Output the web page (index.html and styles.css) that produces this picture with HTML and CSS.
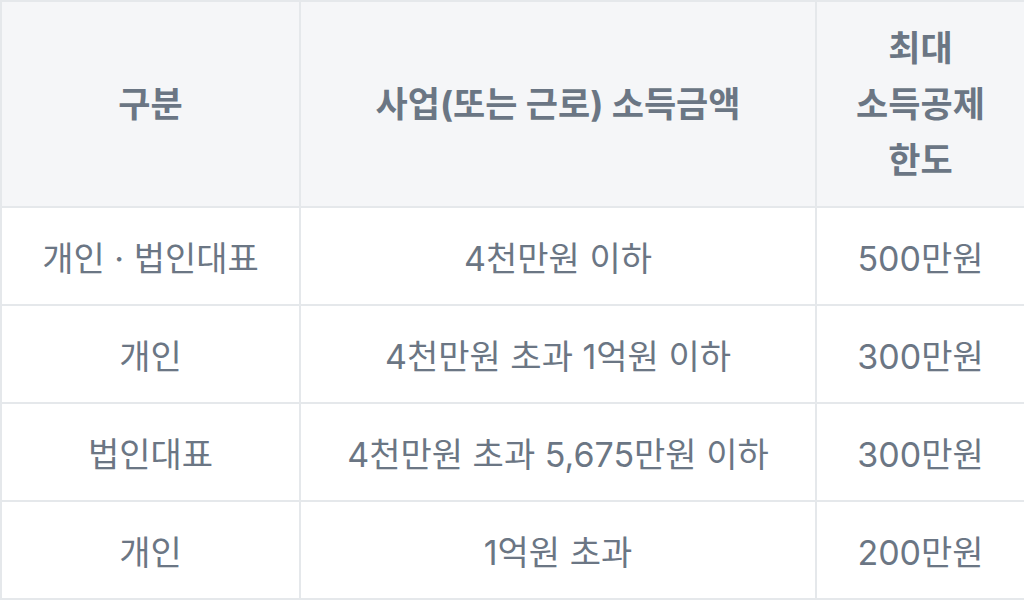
FILE: index.html
```html
<!DOCTYPE html>
<html lang="ko">
<head>
<meta charset="utf-8">
<link rel="stylesheet" href="styles.css">
</head>
<body>
<table class="deduction">
  <colgroup>
    <col class="c1">
    <col class="c2">
    <col class="c3">
  </colgroup>
  <thead>
    <tr class="head-row">
      <th>구분</th>
      <th>사업(또는 근로) 소득금액</th>
      <th>최대<br>소득공제<br>한도</th>
    </tr>
  </thead>
  <tbody>
    <tr class="body-row">
      <td>개인 · 법인대표</td>
      <td>4천만원 이하</td>
      <td>500만원</td>
    </tr>
    <tr class="body-row">
      <td>개인</td>
      <td>4천만원 초과 1억원 이하</td>
      <td>300만원</td>
    </tr>
    <tr class="body-row">
      <td>법인대표</td>
      <td>4천만원 초과 5,675만원 이하</td>
      <td>300만원</td>
    </tr>
    <tr class="body-row">
      <td>개인</td>
      <td>1억원 초과</td>
      <td>200만원</td>
    </tr>
  </tbody>
</table>
</body>
</html>
```

FILE: styles.css
```css
html, body {
  margin: 0;
  padding: 0;
  background: #ffffff;
}

.deduction {
  width: 1024px;
  border-collapse: collapse;
  table-layout: fixed;
  font-family: Inter, "Noto Sans CJK KR", sans-serif;
  font-size: 34px;
  color: #6b7684;
  border: 2px solid #e5e8eb;
}

.c1 { width: 299px; }
.c2 { width: 516px; }
.c3 { width: 209px; }

.deduction th,
.deduction td {
  border: 2px solid #e5e8eb;
  text-align: center;
  vertical-align: middle;
  padding: 0;
}

.deduction th {
  background: #f5f6f8;
  font-size: 35px;
  font-weight: 700;
  line-height: 56px;
}

.head-row {
  height: 206px;
}

.body-row {
  height: 98px;
}
```
